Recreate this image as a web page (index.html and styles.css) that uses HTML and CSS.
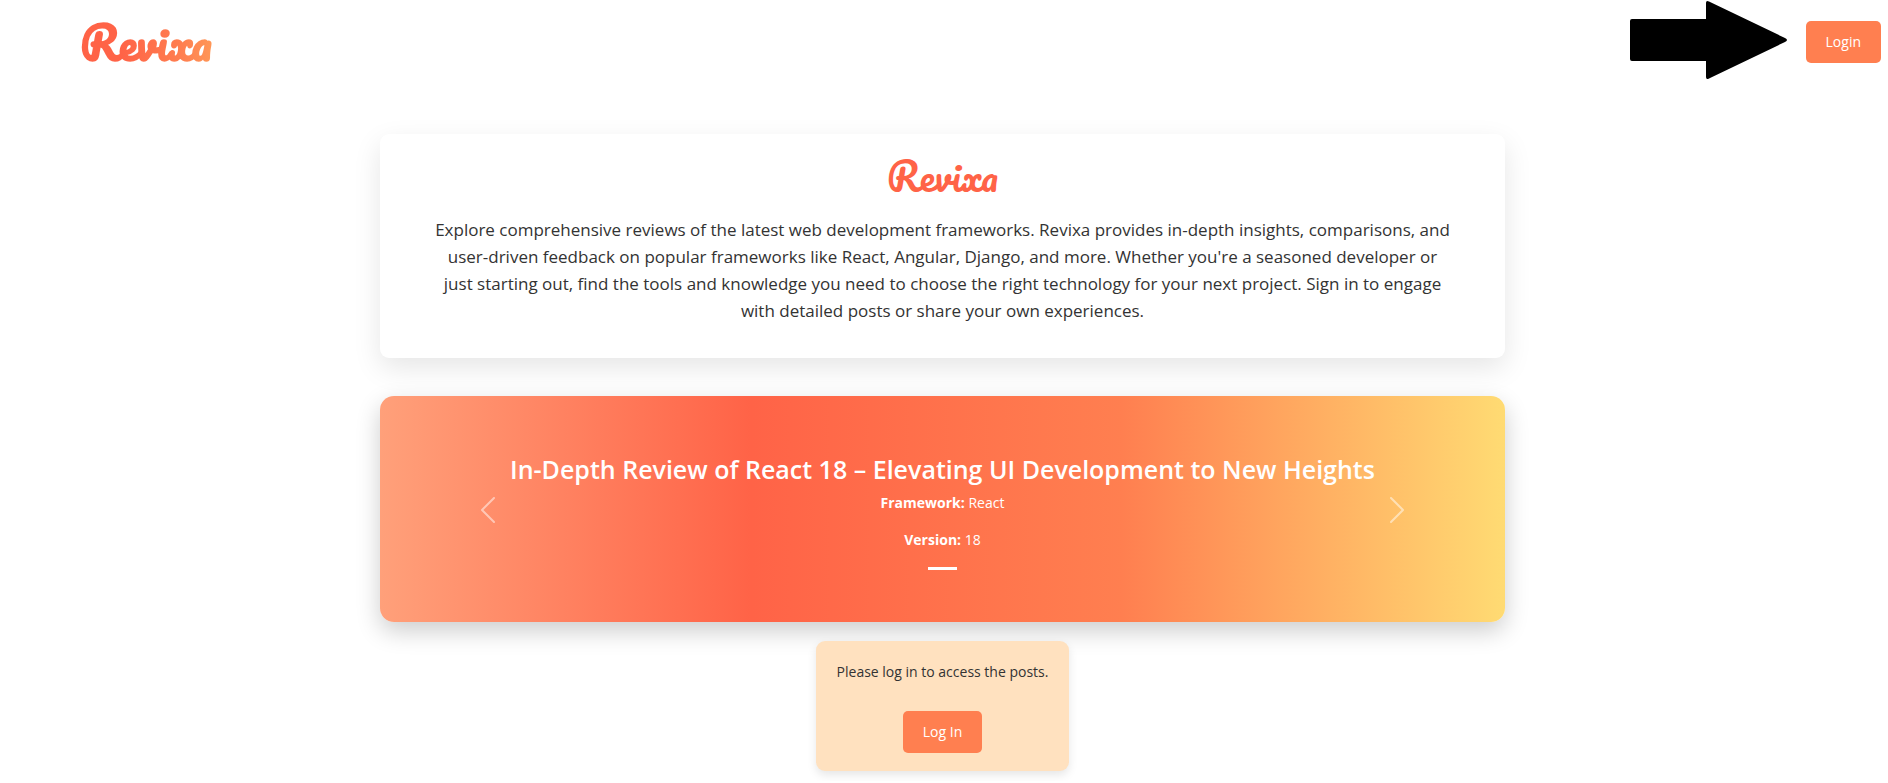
FILE: index.html
```html
<!DOCTYPE html>
<html lang="en">
<head>
<meta charset="utf-8">
<meta name="viewport" content="width=device-width, initial-scale=1">
<title>Revixa</title>
<link rel="stylesheet" href="styles.css">
</head>
<body>
<header class="header">
  <a class="brand" href="#">Revixa</a>
  <div class="header-actions">
    <svg class="arrow" width="158" height="80" viewBox="0 0 158 80" aria-hidden="true"><path d="M2 19H76V3Q76 0 79 1.500L155 38Q159 40 155 42L79 78.500Q76 80 76 77V61H2Q0 61 0 59V21Q0 19 2 19Z"/></svg>
    <button class="btn" type="button">Login</button>
  </div>
</header>
<main class="main">
  <section class="intro">
    <h1 class="intro-title">Revixa</h1>
    <p class="intro-text">Explore comprehensive reviews of the latest web development frameworks. Revixa provides in-depth insights, comparisons, and user-driven feedback on popular frameworks like React, Angular, Django, and more. Whether you're a seasoned developer or just starting out, find the tools and knowledge you need to choose the right technology for your next project. Sign in to engage with detailed posts or share your own experiences.</p>
  </section>
  <section class="carousel" aria-label="Featured reviews">
    <button class="control" type="button" aria-label="Previous">
      <svg width="32" height="32" viewBox="0 0 32 32"><path d="M22 4 10 16 22 28"/></svg>
    </button>
    <div class="slide">
      <h2 class="slide-title">In-Depth Review of React 18 – Elevating UI Development to New Heights</h2>
      <p class="slide-text"><strong>Framework:</strong> React</p>
      <p class="slide-text"><strong>Version:</strong> 18</p>
      <button class="indicator" type="button" aria-label="Slide 1"></button>
    </div>
    <button class="control" type="button" aria-label="Next">
      <svg width="32" height="32" viewBox="0 0 32 32"><path d="M10 4 22 16 10 28"/></svg>
    </button>
  </section>
  <section class="prompt">
    <p class="prompt-text">Please log in to access the posts.</p>
    <button class="btn" type="button">Log In</button>
  </section>
</main>
</body>
</html>
```

FILE: styles.css
```css
* {
  box-sizing: border-box;
}

body {
  margin: 0 3px 0 0;
  background: #fff;
  color: #333;
  font-family: "Segoe UI", "Open Sans", "Noto Sans", sans-serif;
  font-size: 14px;
  line-height: 24px;
}

h1, h2, p {
  margin: 0;
}

.header {
  display: flex;
  align-items: center;
  justify-content: space-between;
  padding: 0 4px 0 80px;
}

.brand,
.intro-title {
  font-family: Pacifico, Lato, cursive;
}

.brand {
  padding: 12px 4px 12px 0;
  font-size: 45px;
  font-weight: 700;
  line-height: 60px;
  text-decoration: none;
  color: transparent;
  background: linear-gradient(90deg, #ff6347 30%, #ff7f50 75%, #ff9a58);
  background-clip: text;
}

.header-actions {
  display: flex;
  align-items: center;
  gap: 18px;
}

.arrow {
  margin-bottom: 4px;
}

.btn {
  padding: 9px 20px;
  border: 0;
  border-radius: 5px;
  background: #ff7f50;
  color: #fff;
  font: inherit;
}

.main {
  display: flex;
  flex-direction: column;
  align-items: center;
  padding: 50px 0 10px;
}

.intro {
  width: 100%;
  max-width: 1125px;
  padding: 16px 54px 34px;
  border-radius: 9px;
  background: #fff;
  box-shadow: 0 10px 28px rgba(0, 0, 0, 0.1);
  text-align: center;
}

.intro-title {
  margin-bottom: 14px;
  color: #ff6347;
  font-size: 38px;
  font-weight: 400;
  line-height: 52px;
}

.intro-text {
  font-size: 17px;
  line-height: 27px;
}

.carousel {
  display: flex;
  align-items: center;
  justify-content: space-between;
  width: 100%;
  max-width: 1125px;
  margin-top: 38px;
  padding: 53px 92px 52px;
  border-radius: 14px;
  background: linear-gradient(90deg, #ffa07a, #ff6347 33%, #ff7f50 66%, #ffdb73);
  box-shadow: 0 9px 24px rgba(0, 0, 0, 0.2);
  color: #fff;
}

.control {
  flex: none;
  display: flex;
  padding: 0;
  border: 0;
  background: none;
  opacity: 0.5;
}

.control path {
  fill: none;
  stroke: #fff;
  stroke-width: 2;
  stroke-linecap: round;
  stroke-linejoin: round;
}

.slide {
  display: flex;
  flex-direction: column;
  align-items: center;
  text-align: center;
}

.slide-title {
  margin-bottom: 2px;
  font-size: 25px;
  font-weight: 600;
  line-height: 40px;
}

.slide-text {
  margin-bottom: 13px;
}

.indicator {
  width: 29px;
  height: 3px;
  margin-top: 2px;
  padding: 0;
  border: 0;
  background: #fff;
}

.prompt {
  display: flex;
  flex-direction: column;
  align-items: center;
  gap: 27px;
  margin-top: 19px;
  padding: 19px 21px 18px;
  border-radius: 9px;
  background: #ffe1bf;
  box-shadow: 0 4px 10px rgba(0, 0, 0, 0.1);
}
```
